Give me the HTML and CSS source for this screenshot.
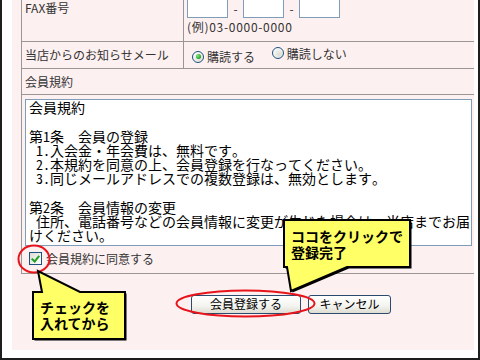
FILE: index.html
```html
<!DOCTYPE html>
<html lang="ja">
<head>
<meta charset="utf-8">
<title>会員登録</title>
<link rel="stylesheet" href="styles.css">
</head>
<body>
<div class="frame">
  <div class="panel">
    <table class="form">
      <tr class="row-fax">
        <th class="label">FAX番号</th>
        <td class="value">
          <div class="tel">
            <input class="tel-in" type="text"><span class="dash">-</span><input class="tel-in" type="text"><span class="dash">-</span><input class="tel-in" type="text">
          </div>
          <div class="example">(例)03-0000-0000</div>
        </td>
      </tr>
      <tr class="row-mail">
        <th class="label">当店からのお知らせメール</th>
        <td class="value">
          <label class="opt"><input class="radio" type="radio" name="mail" checked>購読する</label>
          <label class="opt"><input class="radio" type="radio" name="mail">購読しない</label>
        </td>
      </tr>
      <tr class="row-terms-head">
        <th class="label" colspan="2">会員規約</th>
      </tr>
      <tr class="row-terms">
        <td colspan="2">
          <div class="terms">会員規約

第1条　会員の登録
 1.入会金・年会費は、無料です。
 2.本規約を同意の上、会員登録を行なってください。
 3.同じメールアドレスでの複数登録は、無効とします。

第2条　会員情報の変更
 住所、電話番号などの会員情報に変更が生じた場合は、当店までお届
けください。</div>
        </td>
      </tr>
      <tr class="row-agree">
        <td colspan="2">
          <label class="agree"><input class="check" type="checkbox" checked>会員規約に同意する</label>
        </td>
      </tr>
    </table>
    <div class="actions">
      <button class="btn btn-submit" type="button">会員登録する</button>
      <button class="btn btn-cancel" type="button">キャンセル</button>
    </div>
  </div>
</div>

<svg class="marks" width="480" height="360" viewBox="0 0 480 360">
  <ellipse cx="34" cy="259" rx="15.5" ry="13.5" fill="none" stroke="#e8141b" stroke-width="2"/>
  <ellipse cx="245.5" cy="303.5" rx="69" ry="13" fill="none" stroke="#e8141b" stroke-width="2"/>
  <path d="M34.5,293.5 H44 L39.5,272.5 L82,293.5 H126.5 V340.5 H34.5 Z" fill="#000"/>
  <path d="M33,292 H42 L38,271 L80,292 H125 V339 H33 Z" fill="#ffff66" stroke="#000" stroke-width="2" stroke-linejoin="miter"/>
  <path d="M285.5,221.5 H411.5 V268.5 H349 L292.5,292.5 L289,268.5 H285.5 Z" fill="#000"/>
  <path d="M284,220 H410 V267 H347 L291,291 L287,267 H284 Z" fill="#ffff66" stroke="#000" stroke-width="2" stroke-linejoin="miter"/>
</svg>
<div class="note note-check">チェックを<br>入れてから</div>
<div class="note note-click">ココをクリックで<br>登録完了</div>
</body>
</html>
```

FILE: styles.css
```css
* { box-sizing: border-box; }

html, body {
  margin: 0;
  padding: 0;
}

body {
  position: relative;
  width: 480px;
  height: 360px;
  overflow: hidden;
  background: #fff;
  font-family: "Noto Sans CJK JP", "Noto Sans", sans-serif;
  font-size: 12px;
  color: #333;
}

.frame {
  width: 480px;
  height: 360px;
  border-left: 2px solid #1e1e1e;
  border-right: 2px solid #1e1e1e;
  border-bottom: 2px solid #1e1e1e;
  padding: 0 4px 8px 10px;
  background: #fff;
}

.panel {
  height: 100%;
  background: #fdf0f0;
  padding-left: 9px;
  overflow: hidden;
}

.form {
  width: 453px;
  margin-top: -4px;
  border-collapse: collapse;
  border-left: 1px solid #9a9696;
}

.form th,
.form td {
  padding: 0;
  text-align: left;
  font-weight: normal;
  vertical-align: middle;
  border-bottom: 1px solid #9a9696;
}

.label {
  width: 162px;
  padding-left: 3px !important;
  line-height: 16px;
}

.row-fax .label {
  vertical-align: top;
  padding-top: 4px !important;
}

.value {
  border-left: 1px solid #9a9696;
  padding-left: 3px !important;
}

.row-fax .value {
  height: 45px;
  padding-top: 2px !important;
  padding-bottom: 6px !important;
  vertical-align: top;
}

.tel {
  display: flex;
  align-items: center;
  height: 20px;
}

.tel-in {
  width: 41px;
  height: 20px;
  margin: 0;
  border: 1px solid #7f9db9;
  background: #fff;
  padding: 0 2px;
}

.dash {
  width: 15px;
  text-align: center;
  color: #333;
}

.example {
  margin-top: 1px;
  line-height: 16px;
  letter-spacing: 0.7px;
}

.row-mail th,
.row-mail td {
  height: 27px;
}

.opt {
  display: inline-flex;
  align-items: center;
  margin-right: 9px;
}

.radio {
  appearance: none;
  -webkit-appearance: none;
  width: 12px;
  height: 12px;
  margin: 0 3px 0 5px;
  border: 1px solid #1c5180;
  border-radius: 50%;
  background: radial-gradient(circle at 65% 65%, #dcdcd4 0, #f4f4f0 60%, #ffffff 100%);
  display: inline-grid;
  place-items: center;
}

.radio:checked::after {
  content: "";
  width: 5px;
  height: 5px;
  border-radius: 50%;
  background: radial-gradient(circle at 35% 35%, #8be28b, #21a121 70%);
}

.row-terms-head th {
  height: 26px;
}

.row-terms td {
  border-bottom: none;
  padding: 4px 0 0 3px;
}

.terms {
  width: 447px;
  height: 147px;
  border: 1px solid #7f9db9;
  background: #fff;
  padding: 0 0 0 3px;
  white-space: pre;
  overflow: hidden;
  font-family: "Noto Sans Mono CJK JP", "Noto Sans CJK JP", monospace;
  font-size: 14px;
  line-height: 14.25px;
  color: #000;
}

.row-agree td {
  height: 27px;
  padding-left: 7px;
}

.agree {
  display: inline-flex;
  align-items: center;
  gap: 4px;
}

.check {
  appearance: none;
  -webkit-appearance: none;
  position: relative;
  width: 13px;
  height: 13px;
  margin: 0;
  border: 1px solid #1c5180;
  background: linear-gradient(135deg, #dcdcd4, #ffffff);
}

.check:checked::after {
  content: "";
  position: absolute;
  left: 3px;
  top: 1px;
  width: 3px;
  height: 6px;
  border: solid #21a121;
  border-width: 0 2px 2px 0;
  transform: rotate(40deg);
}

.actions {
  display: flex;
  gap: 7px;
  padding: 21px 0 0 170px;
}

.btn {
  height: 19px;
  margin: 0;
  padding: 0;
  font-family: "Noto Sans CJK JP", sans-serif;
  font-size: 12px;
  line-height: 16px;
  color: #000;
  border: 1px solid #2a4a6e;
  border-radius: 3px;
  background: linear-gradient(#ffffff, #f3f3ef 60%, #dedcd2);
}

.btn-submit { width: 110px; }
.btn-cancel { width: 83px; }

.marks {
  position: absolute;
  left: 0;
  top: 0;
  pointer-events: none;
}

.note {
  position: absolute;
  font-family: "Noto Sans CJK JP", sans-serif;
  font-weight: bold;
  font-size: 14px;
  line-height: 16px;
  color: #000;
}

.note-check {
  left: 40px;
  top: 299px;
}

.note-click {
  left: 291px;
  top: 228px;
}
```
